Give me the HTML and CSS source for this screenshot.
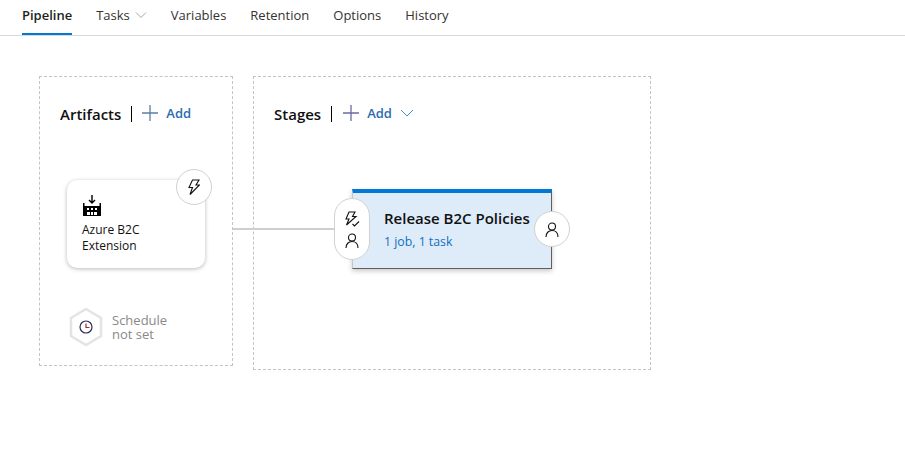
FILE: index.html
```html
<!DOCTYPE html>
<html lang="en">

<head>
  <meta charset="UTF-8">
  <meta name="viewport" content="width=device-width, initial-scale=1.0">
  <title>Pipeline</title>
  <link rel="stylesheet" href="styles.css">
</head>

<body>
  <nav class="tabs">
    <a class="tab active">Pipeline</a>
    <a class="tab">Tasks
      <svg class="chevron" width="12" height="12" viewBox="0 0 12 12"><path d="M1 3.500l5 5 5-5" /></svg>
    </a>
    <a class="tab">Variables</a>
    <a class="tab">Retention</a>
    <a class="tab">Options</a>
    <a class="tab">History</a>
  </nav>

  <main class="canvas">
    <section class="panel artifacts">
      <header class="panel-head">
        <h2>Artifacts</h2>
        <span class="add">
          <svg class="plus" width="16" height="16" viewBox="0 0 16 16"><path d="M8 0v16M0 8h16" /></svg>
          Add
        </span>
      </header>

      <div class="artifact-card">
        <svg class="build-icon" width="18" height="21" viewBox="0 0 18 21">
          <path d="M9 0v8M6 5l3 3 3-3" fill="none" stroke="#000" stroke-width="1.400" />
          <path d="M0 8h1.500v3h15V8H18v13H0z" fill="#000" />
          <path d="M4 13h2v2H4zM8 13h2v2H8zM12 13h2v2h-2zM4 17h3v3H4zM8 17h2v3H8zM11 17h3v3h-3z" fill="#fff" />
        </svg>
        <div class="artifact-name">Azure B2C<br>Extension</div>
      </div>

      <div class="round-btn artifact-trigger">
        <svg class="line-icon" width="12" height="16" viewBox="0 0 12 16">
          <path d="M4.500 1h6.500L8 6h3.500L2 15.500 4.500 8.500H1z" />
        </svg>
      </div>

      <div class="schedule">
        <svg width="34" height="40" viewBox="0 0 34 40">
          <path d="M17 2l15 9v18l-15 9-15-9V11z" fill="#fff" stroke="#e4e4e4" stroke-width="2.500" />
          <circle cx="17" cy="20" r="6" fill="none" stroke="#2b2b55" stroke-width="1.200" />
          <path d="M17 16.500V20.500h3.500" fill="none" stroke="#a4262c" stroke-width="1.200" />
        </svg>
        <div class="schedule-text">
          <span class="schedule-line">Schedule</span>
          <span class="schedule-line">not set</span>
        </div>
      </div>
    </section>

    <section class="panel stages">
      <header class="panel-head">
        <h2>Stages</h2>
        <span class="add">
          <svg class="plus purple" width="16" height="16" viewBox="0 0 16 16"><path d="M8 0v16M0 8h16" /></svg>
          Add
          <svg class="chevron blue" width="12" height="12" viewBox="0 0 12 12"><path d="M0 3l6 6 6-6" /></svg>
        </span>
      </header>

      <div class="connector"></div>

      <div class="stage-card">
        <div class="stage-name">Release B2C Policies</div>
        <div class="stage-meta">1 job, 1 task</div>
      </div>

      <div class="pill">
        <svg class="line-icon" width="16" height="16" viewBox="0 0 16 16">
          <path d="M5 1h6L8.500 5.500H12L2.500 14 5 8H2z" />
          <path d="M8.500 13l2 2 4.500-4.500" />
        </svg>
        <svg class="line-icon" width="14" height="15" viewBox="0 0 14 15">
          <circle cx="7" cy="4.500" r="3.500" />
          <path d="M1 15c0-4 2.500-6.500 6-6.500s6 2.500 6 6.500" />
        </svg>
      </div>

      <div class="round-btn stage-approver">
        <svg class="line-icon" width="14" height="15" viewBox="0 0 14 15">
          <circle cx="7" cy="4.500" r="3.500" />
          <path d="M1 15c0-4 2.500-6.500 6-6.500s6 2.500 6 6.500" />
        </svg>
      </div>
    </section>
  </main>
</body>

</html>
```

FILE: styles.css
```css
body {
  font-family: "Open Sans", "Noto Sans", Arial, sans-serif;
  margin: 0;
  padding: 0;
  background-color: #fff;
  color: #201f1e;
}

.tabs {
  display: flex;
  gap: 24px;
  height: 35px;
  padding-left: 22px;
  border-bottom: 1px solid #d8d8d8;
}

.tab {
  display: flex;
  align-items: center;
  gap: 5px;
  height: 35px;
  padding-bottom: 5px;
  box-sizing: border-box;
  font-size: 13px;
  color: #333;
}

.tab.active {
  font-weight: 600;
  color: #201f1e;
  border-bottom: 2px solid #0078d4;
  padding-bottom: 3px;
}

.chevron path {
  fill: none;
  stroke: #a6a6a6;
  stroke-width: 1;
}

.chevron.blue {
  margin-left: 1px;
}

.chevron.blue path {
  stroke: #4a90c8;
}

.canvas {
  display: flex;
  align-items: flex-start;
  gap: 20px;
  padding: 40px 0 0 39px;
}

.panel {
  position: relative;
  box-sizing: border-box;
  border: 1px dashed #c4c4c4;
}

.artifacts {
  width: 194px;
  height: 290px;
}

.stages {
  width: 398px;
  height: 294px;
}

.panel-head {
  display: flex;
  align-items: center;
  height: 18px;
  margin: 28px 0 0 20px;
}

.panel-head h2 {
  margin: 0;
  padding-right: 10px;
  border-right: 1px solid #000;
  font-size: 15px;
  font-weight: 600;
  line-height: 16px;
  color: #111;
}

.add {
  display: flex;
  align-items: center;
  gap: 8px;
  margin-left: 10px;
  margin-top: -2px;
  font-size: 13px;
  font-weight: 600;
  color: #2b6cb0;
}

.stages .add {
  margin-left: 11px;
}

.plus path {
  fill: none;
  stroke: #5b7fa6;
  stroke-width: 1.300;
}

.plus.purple path {
  stroke: #6a6aa8;
}

.artifact-card {
  position: absolute;
  left: 27px;
  top: 103px;
  width: 138px;
  height: 88px;
  box-sizing: border-box;
  padding: 15px 15px;
  background-color: #fff;
  border-radius: 10px;
  box-shadow: 0 1px 4px rgba(0, 0, 0, 0.28);
}

.build-icon {
  display: block;
  margin-bottom: 6px;
  margin-left: 1px;
}

.artifact-name {
  font-size: 12px;
  line-height: 16px;
  color: #111;
}

.round-btn {
  position: absolute;
  display: flex;
  align-items: center;
  justify-content: center;
  width: 36px;
  height: 36px;
  box-sizing: border-box;
  background-color: #fff;
  border: 1px solid #d0d0d0;
  border-radius: 50%;
}

.artifact-trigger {
  left: 136px;
  top: 92px;
}

.line-icon path,
.line-icon circle {
  fill: none;
  stroke: #111;
  stroke-width: 1.100;
}

.schedule {
  position: absolute;
  left: 29px;
  top: 230px;
  display: flex;
  align-items: center;
  gap: 9px;
}

.schedule-text {
  font-size: 13px;
  color: #8a8886;
}

.schedule-line {
  display: block;
  height: 14px;
  line-height: 14px;
}

.connector {
  position: absolute;
  left: -21px;
  top: 151px;
  width: 103px;
  height: 2px;
  background-color: #cfcfcf;
}

.stage-card {
  position: absolute;
  left: 98px;
  top: 112px;
  width: 200px;
  height: 80px;
  box-sizing: border-box;
  padding: 15px 0 0 31px;
  background-color: #deecf9;
  border-top: 4px solid #0078d4;
  border-right: 1px solid #605e5c;
  border-bottom: 1px solid #605e5c;
  border-left: 1px solid #c8c6c4;
  box-shadow: 0 2px 5px rgba(0, 0, 0, 0.22);
}

.stage-name {
  font-size: 15px;
  font-weight: 600;
  line-height: 20px;
  color: #111;
  white-space: nowrap;
}

.stage-meta {
  margin-top: 6px;
  font-size: 12.300px;
  line-height: 16px;
  color: #106ebe;
}

.pill {
  position: absolute;
  left: 80px;
  top: 121px;
  display: flex;
  flex-direction: column;
  align-items: center;
  justify-content: center;
  gap: 6px;
  width: 36px;
  height: 62px;
  box-sizing: border-box;
  background-color: #fff;
  border: 1px solid #d0d0d0;
  border-radius: 18px;
}

.stage-approver {
  left: 280px;
  top: 134px;
}
```
